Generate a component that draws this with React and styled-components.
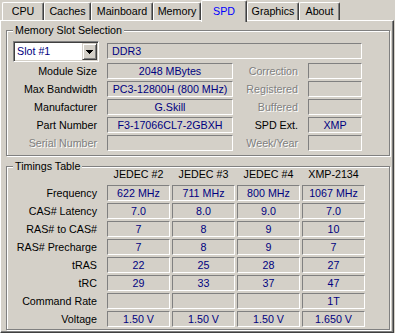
import React from 'react';
import styled, { createGlobalStyle } from 'styled-components';

const Global = createGlobalStyle`
  html, body { margin: 0; padding: 0; background: #d4d0c8; }
  body {
    width: 395px; height: 333px; overflow: hidden;
    font-family: "Liberation Sans", Arial, sans-serif;
    font-size: 10.7px; color: #000;
  }
  * { box-sizing: border-box; }
`;

const Window = styled.div`
  width: 395px;
  height: 333px;
  display: flex;
  flex-direction: column;
`;

const TabStrip = styled.div`
  display: flex;
  align-items: flex-start;
  height: 20px;
  padding-left: 2px;
  position: relative;
  z-index: 1;
`;

const Tab = styled.div`
  width: ${p => p.$w}px;
  height: ${p => (p.$active ? 22 : 18)}px;
  margin-top: ${p => (p.$active ? 0 : 2)}px;
  padding-top: ${p => (p.$active ? 4 : 2)}px;
  border-top: 1px solid #fff;
  border-left: 1px solid #fff;
  border-right: 1px solid #404040;
  box-shadow: inset -1px 0 0 #808080;
  border-radius: 2px 2px 0 0;
  background: #d4d0c8;
  text-align: center;
  line-height: 13px;
  color: ${p => (p.$active ? '#0000ff' : '#000')};
  white-space: nowrap;
`;

const Panel = styled.div`
  width: 394px;
  height: 313px;
  border-top: 1px solid #fff;
  border-left: 1px solid #fff;
  border-right: 1px solid #404040;
  border-bottom: 1px solid #404040;
  box-shadow: inset -1px -1px 0 #808080;
  padding: 9px 0 0 5px;
  display: flex;
  flex-direction: column;
  gap: 10px;
`;

const Group = styled.div`
  position: relative;
  width: 384px;
  border: 1px solid #808080;
  box-shadow: inset 1px 1px 0 #fff, 1px 1px 0 #fff;
  padding: ${p => p.$pad};
  display: flex;
  flex-direction: column;
  gap: 2px;
`;

const GroupTitle = styled.span`
  position: absolute;
  top: -7px;
  left: 6px;
  padding: 0 2px;
  background: #d4d0c8;
  line-height: 13px;
  white-space: nowrap;
`;

const SlotRow = styled.div`
  display: flex;
  height: 20px;
  padding-left: 6px;
`;

const Select = styled.div`
  width: 86px;
  height: 21px;
  flex-shrink: 0;
  display: flex;
  padding: 1px;
  background: #fff;
  border: 1px solid;
  border-color: #808080 #fff #fff #808080;
  box-shadow: inset 1px 1px 0 #404040, inset -1px -1px 0 #d4d0c8;
  margin-right: 8px;
`;

const SelectText = styled.div`
  flex: 1;
  padding-left: 2px;
  line-height: 17px;
  color: #000080;
  white-space: nowrap;
`;

const DropButton = styled.div`
  width: 15px;
  background: #d4d0c8;
  border: 1px solid;
  border-color: #d4d0c8 #404040 #404040 #d4d0c8;
  box-shadow: inset 1px 1px 0 #fff, inset -1px -1px 0 #808080;
  display: flex;
  align-items: center;
  justify-content: center;
`;

const Row = styled.div`
  display: flex;
  align-items: center;
  height: 16px;
`;

const Label = styled.div`
  width: ${p => p.$w}px;
  flex-shrink: 0;
  text-align: right;
  line-height: 16px;
  white-space: nowrap;
  color: ${p => (p.$disabled ? '#808080' : '#000')};
  text-shadow: ${p => (p.$disabled ? '1px 1px 0 #fff' : 'none')};
`;

const Field = styled.div`
  width: ${p => p.$w}px;
  height: 16px;
  flex-shrink: 0;
  margin-left: ${p => p.$ml ?? 10}px;
  margin-top: ${p => p.$mt ?? 0}px;
  border-top: 1px solid #808080;
  border-left: 1px solid #808080;
  border-right: 1px solid #fff;
  border-bottom: 1px solid #fff;
  color: #000080;
  line-height: 14px;
  text-align: ${p => p.$align || 'center'};
  padding: 0 4px;
  white-space: nowrap;
  overflow: hidden;
`;

const Cells = styled.div`
  display: flex;
  gap: 2px;
  margin-left: 10px;
`;

const HeaderRow = styled.div`
  display: flex;
  height: 14px;
  margin-bottom: 2px;
`;

const HeaderCell = styled.div`
  width: 63px;
  text-align: center;
  line-height: 14px;
  white-space: nowrap;
`;

const Cell = styled(Field)`
  margin-left: 0;
`;

const tabs = [
  ['CPU', 42], ['Caches', 47], ['Mainboard', 62], ['Memory', 48],
  ['SPD', 46], ['Graphics', 52], ['About', 41],
];

const info = [
  { label: 'Module Size', value: '2048 MBytes', label2: 'Correction', dis2: true, v2: '' },
  { label: 'Max Bandwidth', value: 'PC3-12800H (800 MHz)', label2: 'Registered', dis2: true, v2: '' },
  { label: 'Manufacturer', value: 'G.Skill', label2: 'Buffered', dis2: true, v2: '' },
  { label: 'Part Number', value: 'F3-17066CL7-2GBXH', label2: 'SPD Ext.', v2: 'XMP' },
  { label: 'Serial Number', dis: true, value: '', label2: 'Week/Year', dis2: true, v2: '' },
];

const heads = ['JEDEC #2', 'JEDEC #3', 'JEDEC #4', 'XMP-2134'];
const timings = [
  ['Frequency', ['622 MHz', '711 MHz', '800 MHz', '1067 MHz']],
  ['CAS# Latency', ['7.0', '8.0', '9.0', '7.0']],
  ['RAS# to CAS#', ['7', '8', '9', '10']],
  ['RAS# Precharge', ['7', '8', '9', '7']],
  ['tRAS', ['22', '25', '28', '27']],
  ['tRC', ['29', '33', '37', '47']],
  ['Command Rate', ['', '', '', '1T']],
  ['Voltage', ['1.50 V', '1.50 V', '1.50 V', '1.650 V']],
];

export default function App() {
  return (
    <Window>
      <Global />
      <TabStrip>
        {tabs.map(([t, w]) => (
          <Tab key={t} $w={w} $active={t === 'SPD'}>{t}</Tab>
        ))}
      </TabStrip>
      <Panel>
        <Group $pad="10px 0 4px 0">
          <GroupTitle>Memory Slot Selection</GroupTitle>
          <SlotRow>
            <Select>
              <SelectText>Slot #1</SelectText>
              <DropButton>
                <svg width="7" height="4" viewBox="0 0 7 4" shapeRendering="crispEdges">
                  <path d="M0 0h7v1H0zM1 1h5v1H1zM2 2h3v1H2zM3 3h1v1H3z" fill="#000" />
                </svg>
              </DropButton>
            </Select>
            <Field $w={255} $ml={0} $mt={2} $align="left">DDR3</Field>
          </SlotRow>
          {info.map(r => (
            <Row key={r.label}>
              <Label $w={90} $disabled={r.dis}>{r.label}</Label>
              <Field $w={126}>{r.value}</Field>
              <Label $w={65} $disabled={r.dis2}>{r.label2}</Label>
              <Field $w={54}>{r.v2}</Field>
            </Row>
          ))}
        </Group>
        <Group $pad="0 0 2px 0">
          <GroupTitle>Timings Table</GroupTitle>
          <HeaderRow>
            <Label $w={90} />
            <Cells>
              {heads.map(h => <HeaderCell key={h}>{h}</HeaderCell>)}
            </Cells>
          </HeaderRow>
          {timings.map(([l, vals]) => (
            <Row key={l}>
              <Label $w={90}>{l}</Label>
              <Cells>
                {vals.map((v, i) => <Cell key={i} $w={63}>{v}</Cell>)}
              </Cells>
            </Row>
          ))}
        </Group>
      </Panel>
    </Window>
  );
}
